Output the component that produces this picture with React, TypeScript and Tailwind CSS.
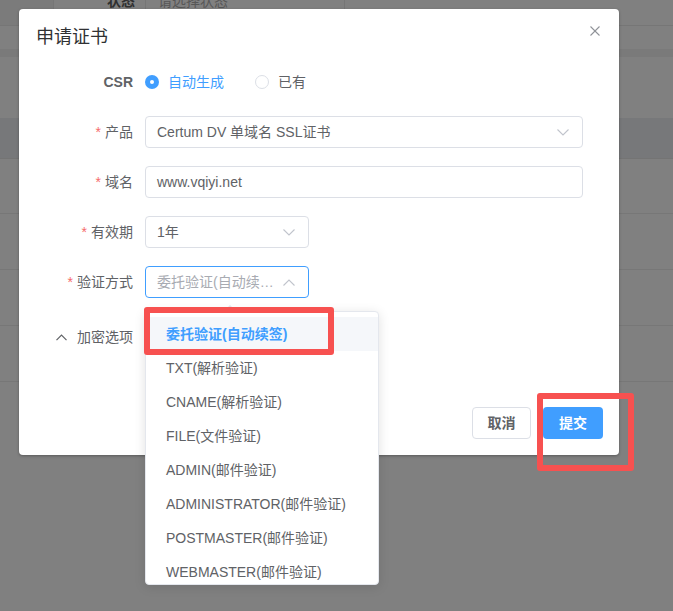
import React from "react";

const FONT = "font-['Liberation_Sans','Noto_Sans_CJK_SC',sans-serif]";

function ChevronDown({ up = false }: { up?: boolean }) {
  return (
    <svg width="12" height="7" viewBox="0 0 12 7" className="block">
      <polyline
        points={up ? "0.5,6.5 6,1 11.5,6.5" : "0.5,0.5 6,6 11.5,0.5"}
        fill="none"
        stroke="#c0c4cc"
        strokeWidth="1.1"
      />
    </svg>
  );
}

function Label({ text, required = true, bold = false }: { text: string; required?: boolean; bold?: boolean }) {
  return (
    <div className={`w-[114px] flex justify-end items-center text-[14px] leading-[20px] text-[#606266] ${bold ? "font-bold" : ""}`}>
      {required && <span className="text-[#f56c6c] mr-[4px]">*</span>}
      <span>{text}</span>
    </div>
  );
}

function SelectBox({
  width,
  value,
  placeholder = false,
  focused = false,
  up = false,
}: {
  width: string;
  value: string;
  placeholder?: boolean;
  focused?: boolean;
  up?: boolean;
}) {
  return (
    <div
      className={`${width} h-[32px] ml-[12px] rounded-[4px] border ${
        focused ? "border-[#409eff]" : "border-[#dcdfe6]"
      } flex items-center pl-[11px] pr-[13px]`}
    >
      <span
        className={`flex-1 text-[14px] leading-[20px] truncate ${placeholder ? "text-[#a8abb2]" : "text-[#606266]"}`}
      >
        {value}
      </span>
      <span className="ml-[6px]">
        <ChevronDown up={up} />
      </span>
    </div>
  );
}

const items = [
  "委托验证(自动续签)",
  "TXT(解析验证)",
  "CNAME(解析验证)",
  "FILE(文件验证)",
  "ADMIN(邮件验证)",
  "ADMINISTRATOR(邮件验证)",
  "POSTMASTER(邮件验证)",
  "WEBMASTER(邮件验证)",
];

export default function App() {
  return (
    <div className={`relative w-[673px] h-[611px] overflow-hidden bg-[#808080] ${FONT}`}>
      {/* background page under overlay */}
      <div className="flex flex-col">
        <div className="h-[26px] flex border-b border-[#767676] overflow-hidden">
          <div className="w-[54px] border-r border-[#767676] bg-[#7b7b7b]" />
          <div className="w-[92px] border-r border-[#767676] flex justify-end pr-[10px]">
            <span className="-mt-[9px] text-[14px] leading-[20px] font-bold text-[#303030]">状态</span>
          </div>
          <div className="w-[199px] border-r border-[#767676] pl-[12px]">
            <span className="block -mt-[9px] text-[14px] leading-[20px] text-[#575757]">请选择状态</span>
          </div>
        </div>
        <div className="h-[23px]" />
        <div className="h-[8px] bg-[#7a7a7a]" />
        <div className="h-[61px]" />
        <div className="h-[41px] bg-[#77787a] border-b border-[#747474]" />
        <div className="h-[55px] border-b border-[#777777]" />
        <div className="h-[56px] border-b border-[#777777]" />
        <div className="h-[56px] border-b border-[#777777]" />
        <div className="h-[56px] border-b border-[#777777]" />
      </div>

      {/* dialog */}
      <div className="absolute left-[19px] top-[9px] w-[600px] h-[446px] bg-white rounded-[4px] shadow-[0_1px_3px_rgba(0,0,0,0.3)] flex flex-col">
        <div className="pt-[16px] pl-[17px] text-[18px] leading-[24px] text-[#303133]">申请证书</div>
        <div className="absolute right-[19px] top-[17px] w-[10px] h-[10px]">
          <svg width="10" height="10" viewBox="0 0 10 10" className="block">
            <line x1="0.5" y1="0.5" x2="9.5" y2="9.5" stroke="#909399" strokeWidth="1.1" />
            <line x1="9.5" y1="0.5" x2="0.5" y2="9.5" stroke="#909399" strokeWidth="1.1" />
          </svg>
        </div>

        {/* CSR */}
        <div className="mt-[17px] h-[32px] flex items-center">
          <Label text="CSR" required={false} bold />
          <div className="ml-[12px] flex items-center">
            <span className="w-[14px] h-[14px] rounded-full bg-[#409eff] flex items-center justify-center">
              <span className="w-[4px] h-[4px] rounded-full bg-white" />
            </span>
            <span className="ml-[9px] text-[14px] leading-[20px] text-[#409eff]">自动生成</span>
            <span className="ml-[31px] w-[14px] h-[14px] rounded-full border border-[#dcdfe6]" />
            <span className="ml-[9px] text-[14px] leading-[20px] text-[#606266]">已有</span>
          </div>
        </div>

        <div className="mt-[18px] h-[32px] flex items-center">
          <Label text="产品" />
          <SelectBox width="w-[438px]" value="Certum DV 单域名 SSL证书" />
        </div>

        <div className="mt-[18px] h-[32px] flex items-center">
          <Label text="域名" />
          <div className="w-[438px] h-[32px] ml-[12px] rounded-[4px] border border-[#dcdfe6] flex items-center pl-[11px]">
            <span className="text-[14px] leading-[20px] text-[#606266]">www.vqiyi.net</span>
          </div>
        </div>

        <div className="mt-[18px] h-[32px] flex items-center">
          <Label text="有效期" />
          <SelectBox width="w-[164px]" value="1年" />
        </div>

        <div className="mt-[18px] h-[32px] flex items-center">
          <Label text="验证方式" />
          <SelectBox width="w-[164px]" value="委托验证(自动续签)" placeholder focused up />
        </div>

        <div className="mt-[19px] h-[40px] flex items-center">
          <div className="w-[114px] flex justify-end items-center">
            <svg width="11" height="7" viewBox="0 0 11 7" className="block mr-[10px]">
              <polyline points="0.5,6.2 5.5,1 10.5,6.2" fill="none" stroke="#606266" strokeWidth="1.2" />
            </svg>
            <span className="text-[14px] leading-[20px] text-[#606266]">加密选项</span>
          </div>
        </div>

        <div className="mt-[50px] flex justify-end pr-[16px] gap-[12px]">
          <button className="w-[59px] h-[32px] rounded-[4px] border border-[#dcdfe6] bg-white text-[14px] font-semibold text-[#606266] flex items-center justify-center">
            取消
          </button>
          <button className="w-[60px] h-[32px] rounded-[4px] bg-[#409eff] text-[14px] font-semibold text-white flex items-center justify-center">
            提交
          </button>
        </div>
      </div>

      {/* dropdown */}
      <div className="absolute left-[224px] top-[305px] w-0 h-0 border-l-[6px] border-r-[6px] border-b-[6px] border-l-transparent border-r-transparent border-b-[#e4e7ed]" />
      <div className="absolute left-[145px] top-[311px] w-[234px] h-[274px] bg-white border border-[#e4e7ed] rounded-[4px] shadow-[0_2px_12px_rgba(0,0,0,0.12)] overflow-hidden pt-[5px]">
        {items.map((t, i) => (
          <div
            key={t}
            className={`h-[34px] flex items-center pl-[20px] text-[14px] leading-[20px] whitespace-nowrap ${
              i === 0 ? "bg-[#f5f7fa] text-[#409eff] font-bold" : "text-[#606266]"
            }`}
          >
            {t}
          </div>
        ))}
      </div>

      {/* annotation boxes */}
      <div className="absolute left-[144px] top-[307px] w-[190px] h-[48px] border-[6px] border-[#f75150] rounded-[3px]" />
      <div className="absolute left-[537px] top-[393px] w-[97px] h-[78px] border-[6px] border-[#f75150] rounded-[3px]" />
    </div>
  );
}
